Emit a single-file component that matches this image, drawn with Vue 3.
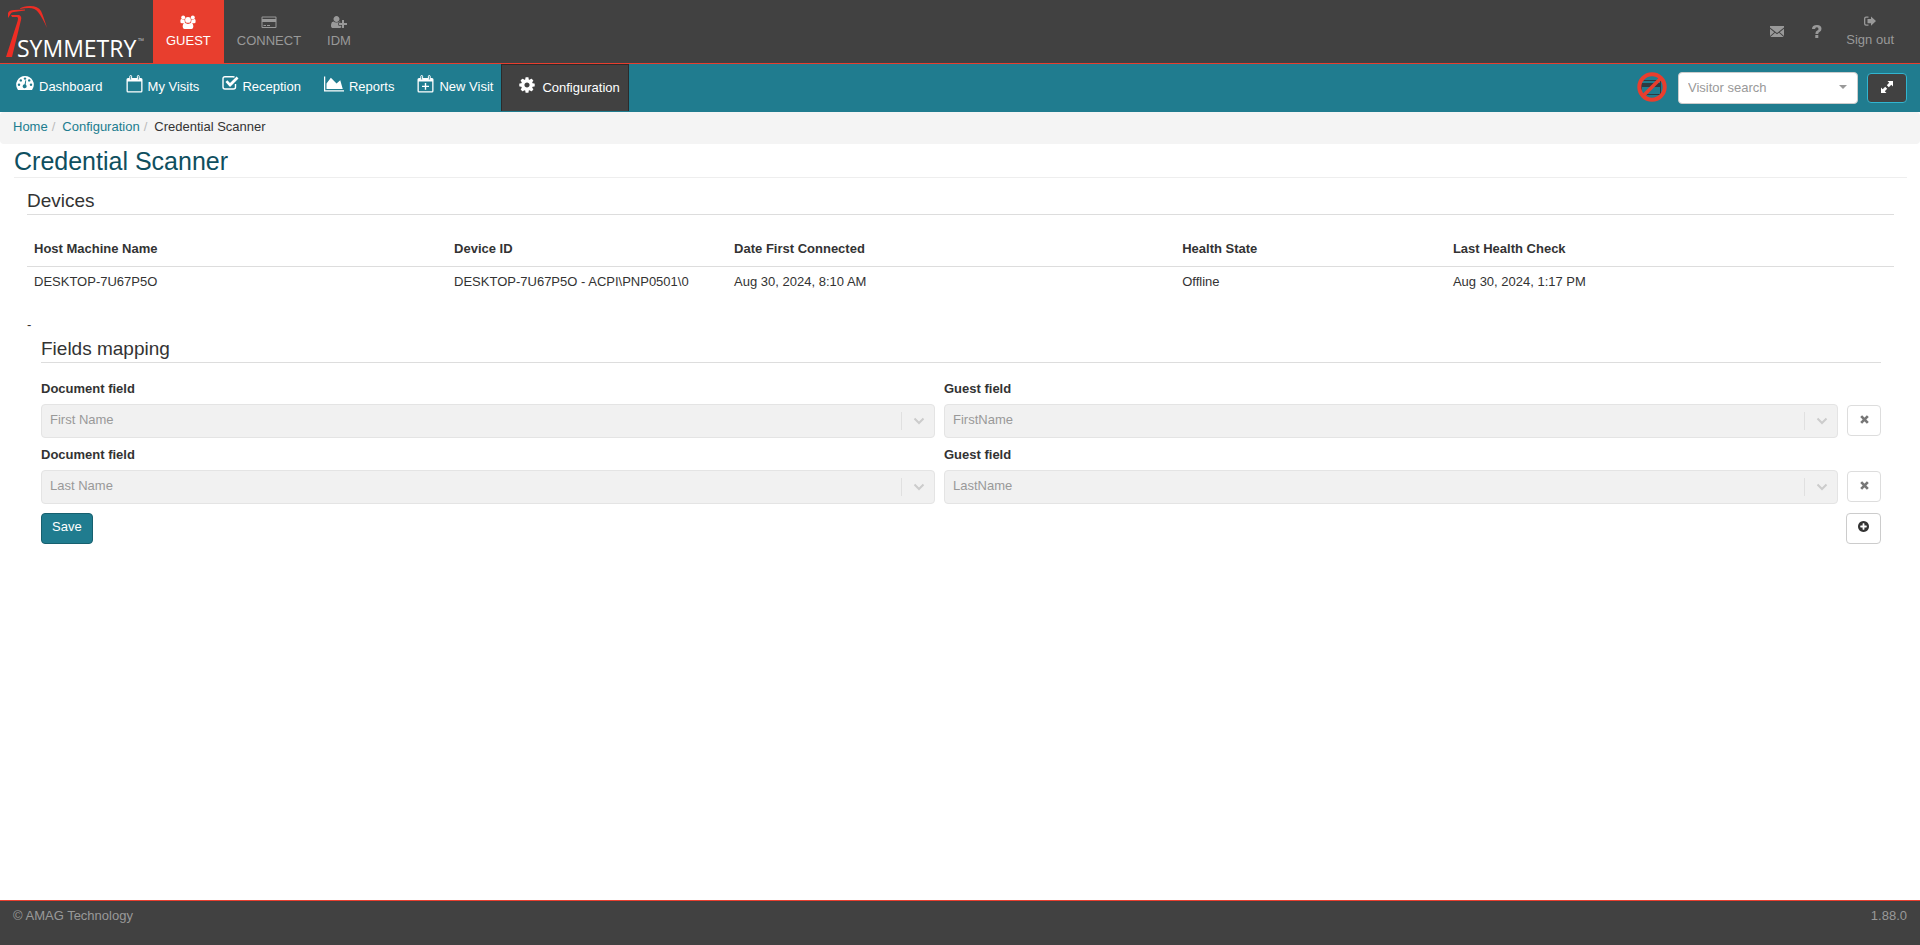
<script setup>
import { ref } from 'vue'

const tabs = [
  { label: 'GUEST', icon: 'group', active: true },
  { label: 'CONNECT', icon: 'card', active: false },
  { label: 'IDM', icon: 'userplus', active: false },
]
const nav = [
  { label: 'Dashboard', icon: 'gauge' },
  { label: 'My Visits', icon: 'calendar' },
  { label: 'Reception', icon: 'check' },
  { label: 'Reports', icon: 'chart' },
  { label: 'New Visit', icon: 'calendarplus' },
]
const columns = ['Host Machine Name', 'Device ID', 'Date First Connected', 'Health State', 'Last Health Check']
const devices = [
  ['DESKTOP-7U67P5O', 'DESKTOP-7U67P5O - ACPI\\PNP0501\\0', 'Aug 30, 2024, 8:10 AM', 'Offline', 'Aug 30, 2024, 1:17 PM'],
]
const mappings = ref([
  { id: 1, document: 'First Name', guest: 'FirstName' },
  { id: 2, document: 'Last Name', guest: 'LastName' },
])
</script>

<template>
  <div class="page">
    <header class="topbar">
      <a href="#" class="logo" aria-label="Symmetry home">
        <svg width="147" height="63" viewBox="0 0 147 63">
          <path fill="#ee2d24" d="M20 8.500 Q23 6 30 6 Q38 6 41 11 Q43 15 47 28 Q42 17 38 12 Q35 8 29 8 Q24 8 20 9Z" />
          <path fill="#ee2d24" d="M8 18 L8 13 Q9 10 14 10 L25 9.500 L25 10.500 L14 12 Q11 12 10 15Z" />
          <path fill="#ee2d24" d="M11 15 L19 15 Q22 16 21 20 L12 57 L6 57 L17 23 Q19 17 17 17 L12 17Z" />
          <text x="17" y="57" class="logo-word">SYMMETRY</text>
          <text x="138" y="44" class="logo-tm">™</text>
        </svg>
      </a>
      <nav class="tabs" aria-label="Products">
        <a v-for="t in tabs" :key="t.label" href="#" class="tab" :class="{ active: t.active }">
          <svg v-if="t.icon === 'group'" width="16" height="14" viewBox="0 0 16 14">
            <circle cx="3.2" cy="2.4" r="2" /><circle cx="12.8" cy="2.4" r="2" />
            <path d="M.5 7.5Q0 4 1.5 4Q3 5 4.6 4.5Q4.3 6.5 5.3 7.5L4 8.3H1.8Q.7 8.3.5 7.5ZM15.5 7.5Q16 4 14.5 4Q13 5 11.4 4.5Q11.7 6.5 10.7 7.5L12 8.3H14.2Q15.3 8.3 15.5 7.5Z" />
            <circle cx="8" cy="4.900" r="2.900" />
            <path d="M4.700 7.800Q8 10 11.300 7.800Q13.500 8.600 13.300 12Q13 14 11.500 14H4.500Q3 14 2.700 12Q2.500 8.600 4.700 7.800Z" />
          </svg>
          <svg v-else-if="t.icon === 'card'" width="16" height="14" viewBox="0 0 16 14">
            <path fill-rule="evenodd" d="M1.500 1.500H14.500Q15.500 1.500 15.500 2.500V12Q15.500 13 14.500 13H1.500Q.5 13 .5 12V2.500Q.5 1.500 1.500 1.500ZM1.500 2.500V4H14.500V2.500ZM1.500 7V12H14.500V7ZM2.500 10H5V11H2.500ZM6 10H9V11H6Z" />
          </svg>
          <svg v-else width="16" height="14" viewBox="0 0 2048 1792">
            <path d="M704 896q-159 0-271.500-112.500t-112.500-271.500 112.500-271.500 271.500-112.500 271.500 112.500 112.500 271.500-112.500 271.500-271.500 112.500zm960 128h352q13 0 22.500 9.500t9.500 22.500v192q0 13-9.500 22.500t-22.500 9.500h-352v352q0 13-9.500 22.500t-22.500 9.500h-192q-13 0-22.500-9.500t-9.500-22.500v-352h-352q-13 0-22.500-9.500t-9.500-22.500v-192q0-13 9.500-22.500t22.500-9.500h352v-352q0-13 9.500-22.500t22.500-9.500h192q13 0 22.500 9.500t9.500 22.500v352zm-736 224q0 52 38 90t90 38h256v238q-68 50-171 50h-874q-121 0-194-69t-73-190q0-53 3.500-103.500t14-109 26.500-108.500 43-97.500 62-81 85.500-53.500 111.500-20q19 0 39 17 79 61 154.500 91.500t164.500 30.500 164.500-30.500 154.500-91.500q20-17 39-17 132 0 217 96h-223q-52 0-90 38t-38 90v192z" />
          </svg>
          <span>{{ t.label }}</span>
        </a>
      </nav>
      <div class="account">
        <a href="#" class="account-link" aria-label="Messages">
          <svg width="14" height="11" viewBox="0 0 14 11"><path d="M0 0H14V1.500L7 7L0 1.500ZM0 2.800L4.300 6.200L0 10ZM14 2.800L9.700 6.200L14 10ZM5 6.800L7 8.300L9 6.800L13.700 11H.3Z" /></svg>
        </a>
        <a href="#" class="account-link help" aria-label="Help">
          <svg width="10" height="13" viewBox="0 0 10 13"><path d="M0 4Q0 0 5 0Q9.500 0 9.500 3.800Q9.500 6 7.500 7Q6.200 7.600 6.200 9H3.400Q3.300 6.500 5.200 5.600Q6.500 5 6.500 3.900Q6.500 2.300 4.900 2.300Q3.100 2.300 3.100 4ZM3.300 10H6.300V13H3.300Z" /></svg>
        </a>
        <a href="#" class="account-link signout">
          <svg width="12" height="14" viewBox="0 0 12 14"><path d="M4.500 2.500V3.700H2.300Q1.300 3.700 1.300 4.700V9.500Q1.300 10.500 2.300 10.500H4.500V11.700H2Q0 11.700 0 9.700V4.500Q0 2.500 2 2.500ZM7 2.500L12 7.100L7 11.700V9.300H3.500V5H7Z" /></svg>
          <span>Sign out</span>
        </a>
      </div>
    </header>

    <div class="navbar">
      <nav class="menu" aria-label="Main">
        <a v-for="n in nav" :key="n.label" href="#" class="menu-link" :class="n.icon">
          <svg v-if="n.icon === 'gauge'" width="18" height="16" viewBox="0 0 18 16">
            <path d="M9 1A8.700 8.700 0 0 1 16.300 14.500Q16 15 15.500 15H2.500Q2 15 1.700 14.500A8.700 8.700 0 0 1 9 1Z" />
            <g fill="#207c8f"><circle cx="3" cy="9.700" r="1.200" /><circle cx="4.800" cy="5.400" r="1.200" /><circle cx="9" cy="3.600" r="1.200" /><circle cx="13.200" cy="5.400" r="1.200" /><circle cx="15" cy="9.700" r="1.200" /><path d="M10.200 5.500L9.700 9.600A2 2 0 1 1 8.600 9.300L9.400 5.300Z" /></g>
          </svg>
          <svg v-else-if="n.icon === 'check'" width="17" height="16" viewBox="0 0 17 16">
            <path fill="none" stroke="#fff" stroke-width="1.400" d="M12.500 2.200Q12 1.700 11 1.700H3Q1 1.700 1 3.700V12Q1 14 3 14H11.500Q13.500 14 13.500 12V9" />
            <path d="M3.500 7L5.300 5.300L8 8L14.600 1.600L16.500 3.500L8 12Z" />
          </svg>
          <svg v-else-if="n.icon === 'chart'" width="20" height="18" viewBox="0 0 2048 1792">
            <path d="M2048 1536v128h-2048v-1536h128v1408h1920zm-384-1024l256 896h-1664v-576l448-576 576 576z" />
          </svg>
          <svg v-else width="17" height="18" viewBox="0 0 17 18">
            <path fill-rule="evenodd" d="M2 3H15Q16.500 3 16.500 4.500V16Q16.500 17.500 15 17.500H2Q.5 17.500.5 16V4.500Q.5 3 2 3ZM1.800 6.500V16.200H15.200V6.500Z" />
            <path fill="#207c8f" stroke="#fff" d="M3.800 1.200Q3.800.5 4.700.5T5.600 1.200V4.300Q5.600 5 4.700 5T3.800 4.300ZM11.400 1.200Q11.400.5 12.300.5T13.200 1.200V4.300Q13.200 5 12.300 5T11.400 4.300Z" />
            <path v-if="n.icon === 'calendarplus'" d="M7.800 8H9.200V10.700H12V12H9.200V14.700H7.800V12H5V10.700H7.800Z" />
          </svg>
          <span>{{ n.label }}</span>
        </a>
        <a href="#" class="menu-link current" aria-current="page">
          <svg width="18" height="18" viewBox="0 0 1792 1792"><path d="M1152 896q0-106-75-181t-181-75-181 75-75 181 75 181 181 75 181-75 75-181zm512-109v222q0 12-8 23t-20 13l-185 28q-19 54-39 91 35 50 107 138 10 12 10 25t-9 23q-27 37-99 108t-94 71q-12 0-26-9l-138-108q-44 23-91 38-16 136-29 186-7 28-36 28h-222q-14 0-24.500-8.500t-11.500-21.500l-28-184q-49-16-90-37l-141 107q-10 9-25 9-14 0-25-11-126-114-165-168-7-10-7-23 0-12 8-23 15-21 51-66.500t54-70.500q-27-50-41-99l-183-27q-13-2-21-12.500t-8-23.500v-222q0-12 8-23t19-13l186-28q14-46 39-92-40-57-107-138-10-12-10-24 0-10 9-23 26-36 98.500-107.500t94.500-71.500q13 0 26 10l138 107q44-23 91-38 16-136 29-186 7-28 36-28h222q14 0 24.500 8.500t11.500 21.500l28 184q49 16 90 37l142-107q9-9 24-9 13 0 25 10 129 119 165 170 7 8 7 22 0 12-8 23-15 21-51 66.500t-54 70.500q26 50 41 98l183 28q13 2 21 12.500t8 23.500z" /></svg>
          <span>Configuration</span>
        </a>
      </nav>
      <div class="tools">
        <svg class="blocked" width="30" height="30" viewBox="0 0 30 30" role="img" aria-label="Scanner unavailable">
          <path fill="none" stroke="#2b3b42" d="M4.500 8.500H23.500V22.500H4.500Z" />
          <path fill="#2b3b42" d="M5 11H24V15H5Z" />
          <circle cx="15" cy="15" r="12.700" fill="none" stroke="#e83e2e" stroke-width="4" />
          <path stroke="#e83e2e" stroke-width="3.500" d="M6.500 23.500L23.500 6.500" />
        </svg>
        <div class="search">
          <select aria-label="Visitor search"><option>Visitor search</option></select>
          <svg width="8" height="4" viewBox="0 0 8 4"><path fill="#999" d="M0 0H8L4 4Z" /></svg>
        </div>
        <button type="button" class="expand" aria-label="Toggle full screen">
          <svg width="12" height="12" viewBox="0 0 12 12"><path fill="#fff" d="M6.500 0H12V5.500L10.300 3.800L7.800 6.200L5.800 4.200L8.200 1.700ZM0 6.500L1.700 8.200L4.200 5.800L6.200 7.800L3.800 10.300L5.500 12H0Z" /></svg>
        </button>
      </div>
    </div>

    <nav class="crumbs" aria-label="Breadcrumb">
      <a href="#">Home</a><span class="slash">/</span><a href="#">Configuration</a><span class="slash">/</span><span>Credential Scanner</span>
    </nav>

    <main>
      <h1>Credential Scanner</h1>
      <section class="devices">
        <h2>Devices</h2>
        <table>
          <colgroup><col class="c-host"><col class="c-id"><col class="c-date"><col class="c-state"><col class="c-check"></colgroup>
          <thead><tr><th v-for="c in columns" :key="c" scope="col">{{ c }}</th></tr></thead>
          <tbody><tr v-for="d in devices" :key="d[0]"><td v-for="(v, i) in d" :key="i">{{ v }}</td></tr></tbody>
        </table>
        <p class="dash">-</p>
        <form class="mapping" @submit.prevent>
          <h2>Fields mapping</h2>
          <div v-for="m in mappings" :key="m.id" class="map-row">
            <div class="field">
              <label :for="'document-' + m.id">Document field</label>
              <div class="picker">
                <select :id="'document-' + m.id" disabled><option>{{ m.document }}</option></select>
                <span class="arrow"><svg width="12" height="8" viewBox="0 0 12 8"><path d="M1.500 1.500L6 6L10.500 1.500" /></svg></span>
              </div>
            </div>
            <div class="field">
              <label :for="'guest-' + m.id">Guest field</label>
              <div class="picker">
                <select :id="'guest-' + m.id" disabled><option>{{ m.guest }}</option></select>
                <span class="arrow"><svg width="12" height="8" viewBox="0 0 12 8"><path d="M1.500 1.500L6 6L10.500 1.500" /></svg></span>
              </div>
            </div>
            <button type="button" class="btn remove" aria-label="Remove mapping" disabled>
              <svg width="9" height="9" viewBox="0 0 10 10"><path fill="none" stroke="#777" stroke-width="3" d="M1.300 1.300L8.700 8.700M8.700 1.300L1.300 8.700" /></svg>
            </button>
          </div>
          <div class="actions">
            <button type="submit" class="btn save">Save</button>
            <button type="button" class="btn add" aria-label="Add mapping">
              <svg width="11" height="11" viewBox="128 128 1536 1536"><path fill="#333" d="M1344 960v-128q0-26-19-45t-45-19h-256v-256q0-26-19-45t-45-19h-128q-26 0-45 19t-19 45v256h-256q-26 0-45 19t-19 45v128q0 26 19 45t45 19h256v256q0 26 19 45t45 19h128q26 0 45-19t19-45v-256h256q26 0 45-19t19-45zm320-64q0 209-103 385.500t-279.500 279.500-385.500 103-385.500-103-279.500-279.500-103-385.500 103-385.500 279.500-279.500 385.500-103 385.500 103 279.500 279.500 103 385.500z" /></svg>
            </button>
          </div>
        </form>
      </section>
    </main>

    <footer>
      <span>© AMAG Technology</span>
      <span>1.88.0</span>
    </footer>
  </div>
</template>

<style>
body { margin: 0; background: #fff; }
</style>

<style scoped>
.page {
  display: flex;
  flex-direction: column;
  min-height: 100vh;
  font: 13px/18px "Liberation Sans", Arial, sans-serif;
  color: #333;
}
.page *, .page { box-sizing: border-box; }
a { text-decoration: none; color: #207c8f; }
button, select { font: inherit; }
svg { display: block; flex: none; fill: currentColor; }

.topbar {
  display: flex;
  height: 64px;
  background: #414141;
  border-bottom: 1px solid #e83e2e;
}
.logo { width: 153px; }
.logo-word { font: 23px "Open Sans", "Noto Sans", sans-serif; fill: #fff; }
.logo-tm { font: 8px "Open Sans", sans-serif; fill: #bbb; }
.tabs { display: flex; }
.tab {
  display: flex;
  flex-direction: column;
  align-items: center;
  gap: 3px;
  padding: 15px 13px 0;
  color: #999;
}
.tab.active { background: #e83e2e; color: #fff; }
.account { display: flex; align-items: center; gap: 28px; margin-left: auto; padding-right: 26px; }
.account-link { color: #999; }
.help { margin-right: -4px; }
.signout { display: flex; flex-direction: column; align-items: center; gap: 3px; }

.navbar { display: flex; justify-content: space-between; height: 48px; background: #207c8f; }
.menu { display: flex; padding-left: 4px; }
.menu-link {
  display: flex;
  gap: 5px;
  padding: 11px 11px 0 12px;
  color: #fff;
}
.menu-link span { padding-top: 3px; }
.menu-link.check { gap: 3px; }
.menu-link.calendarplus { padding-right: 8px; }
.menu-link.current {
  gap: 6px;
  margin-bottom: 1px;
  padding: 11px 8px 0 16px;
  background: #414141;
  border: 1px solid #2b2b2b;
  border-bottom: 0;
}
.tools { display: flex; align-items: center; padding-right: 13px; }
.blocked { margin-bottom: 2px; }
.search { position: relative; width: 180px; margin: 0 9px 0 11px; }
.search select {
  display: block;
  width: 100%;
  height: 32px;
  padding: 0 9px;
  appearance: none;
  color: #999;
  background: #fff;
  border: 1px solid #ccc;
  border-radius: 4px;
}
.search svg { position: absolute; right: 11px; top: 13px; pointer-events: none; }
.expand {
  display: flex;
  justify-content: center;
  width: 40px;
  height: 30px;
  padding: 7px 0 0;
  background: #414141;
  border: 1px solid #31b5d0;
  border-radius: 4px;
}

.crumbs { display: flex; padding: 6px 14px 8px 13px; background: #f4f4f4; border-radius: 4px; }
.slash { padding: 0 7px 0 4px; color: #bbb; }

main { padding: 2px 13px 0 14px; }
h1, h2 { margin: 0; font-weight: 400; }
h1 { padding-bottom: 1px; font-size: 25px; line-height: 30px; color: #0f4f5f; border-bottom: 1px solid #eee; }
h2 { padding: 1px 0; font-size: 19px; line-height: 24px; border-bottom: 1px solid #ddd; }
.devices { padding: 10px 13px 0; }
table { width: 100%; margin-top: 17px; table-layout: fixed; border-collapse: separate; border-spacing: 0; }
.c-host { width: 22.5%; }
.c-id { width: 15%; }
.c-date { width: 24%; }
.c-state { width: 14.5%; }
.c-check { width: 24%; }
th { padding: 8px 7px; text-align: left; border-bottom: 1px solid #ddd; }
td { padding: 6px 7px 5px; }
.dash { margin: 20px 0 2px; }

.mapping { padding: 0 13px 0 14px; }
.mapping h2 { margin-bottom: 17px; }
.map-row { display: flex; align-items: flex-end; gap: 9px; margin-bottom: 8px; }
.field { flex: 1; }
label { display: block; margin-bottom: 6px; font-weight: 700; }
.picker { position: relative; }
.picker select {
  display: block;
  width: 100%;
  height: 34px;
  padding: 0 42px 2px 8px;
  appearance: none;
  color: #999;
  opacity: 1;
  background: #f1f1f1;
  border: 1px solid #e4e4e4;
  border-radius: 4px;
}
.arrow {
  position: absolute;
  top: 8px;
  right: 0;
  display: flex;
  align-items: center;
  justify-content: center;
  width: 34px;
  height: 18px;
  border-left: 1px solid #e0e0e0;
  pointer-events: none;
}
.arrow path { fill: none; stroke: #ccc; stroke-width: 2; }
.btn {
  display: flex;
  justify-content: center;
  height: 31px;
  padding: 4px 10px 0;
  background: #fff;
  border: 1px solid #ccc;
  border-radius: 4px;
}
.remove { width: 34px; margin-bottom: 2px; padding: 9px 0 0; border-color: #ddd; }
.actions { display: flex; justify-content: space-between; padding-top: 1px; }
.save { color: #fff; background: #207c8f; border-color: #17606f; }
.add { width: 35px; padding: 7px 0 0; }

footer {
  display: flex;
  justify-content: space-between;
  height: 45px;
  margin-top: auto;
  padding: 6px 13px 0;
  color: #999;
  background: #414141;
  border-top: 1px solid #e83e2e;
}
</style>
